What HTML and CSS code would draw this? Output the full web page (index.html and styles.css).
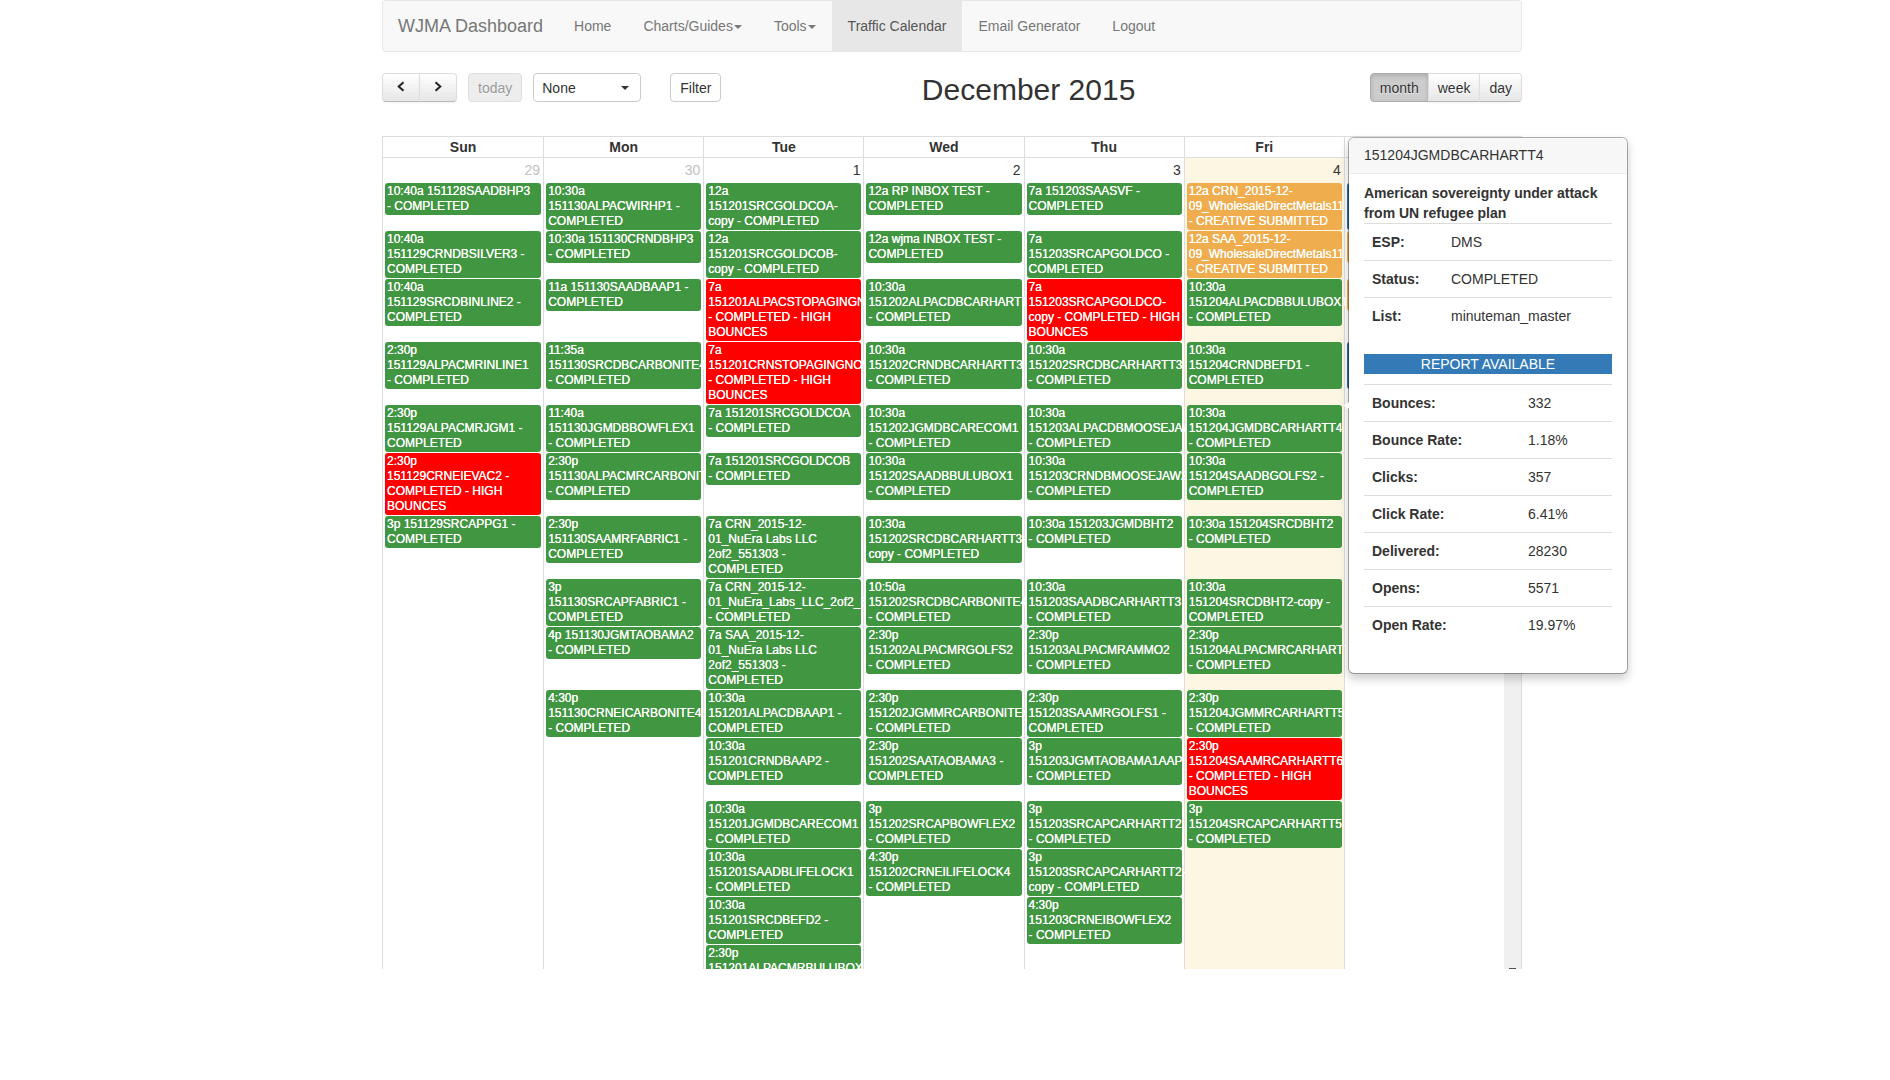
FILE: index.html
```html
<!DOCTYPE html>
<html lang="en">
<head>
<meta charset="utf-8">
<title>WJMA Dashboard</title>
<link rel="stylesheet" href="styles.css">
</head>
<body>
<div class="container">
  <nav class="navbar">
    <a class="brand" href="#">WJMA Dashboard</a>
    <a class="nav-link" href="#">Home</a>
    <a class="nav-link" href="#">Charts/Guides<span class="caret"></span></a>
    <a class="nav-link" href="#">Tools<span class="caret"></span></a>
    <a class="nav-link active" href="#">Traffic Calendar</a>
    <a class="nav-link" href="#">Email Generator</a>
    <a class="nav-link" href="#">Logout</a>
  </nav>

  <header class="toolbar">
    <div class="toolbar-left">
      <div class="btn-group">
        <button class="fc-btn arrow" type="button" aria-label="Previous"><svg width="10" height="12" viewBox="0 0 10 12"><path d="M7.5 1.200 2.700 5.500 7.500 9.800"/></svg></button>
        <button class="fc-btn arrow" type="button" aria-label="Next"><svg width="10" height="12" viewBox="0 0 10 12"><path d="M2.500 1.200 7.300 5.500 2.500 9.800"/></svg></button>
      </div>
      <button class="fc-btn today-btn" type="button" disabled>today</button>
      <div class="select-wrap">
        <select class="select" aria-label="Filter by"><option>None</option></select>
        <span class="caret"></span>
      </div>
      <button class="filter" type="button">Filter</button>
    </div>
    <h2 class="title">December 2015</h2>
    <div class="btn-group">
      <button class="fc-btn pressed" type="button">month</button>
      <button class="fc-btn" type="button">week</button>
      <button class="fc-btn" type="button">day</button>
    </div>
  </header>

  <main class="calendar">
    <div class="scroller">
      <div class="month-wrap">
      <table class="month">
        <thead>
          <tr><th>Sun</th><th>Mon</th><th>Tue</th><th>Wed</th><th>Thu</th><th>Fri</th><th>Sat</th></tr>
        </thead>
        <tbody>
          <tr class="numbers"><td class="other">29</td><td class="other">30</td><td>1</td><td>2</td><td>3</td><td class="today">4</td><td>5</td></tr>
          <tr>
            <td><a class="ev" href="#">10:40a 151128SAADBHP3<br>- COMPLETED</a></td>
            <td><a class="ev" href="#">10:30a<br>151130ALPACWIRHP1 - COMPLETED</a></td>
            <td><a class="ev" href="#">12a<br>151201SRCGOLDCOA-copy - COMPLETED</a></td>
            <td><a class="ev" href="#">12a RP INBOX TEST - COMPLETED</a></td>
            <td><a class="ev" href="#">7a 151203SAASVF - COMPLETED</a></td>
            <td class="today"><a class="ev orange" href="#">12a CRN_2015-12-<br>09_WholesaleDirectMetals11<br>- CREATIVE SUBMITTED</a></td>
            <td><a class="ev blue" href="#">10:30a<br>151205ALPACDBGOLFS2<br>- SCHEDULED</a></td>
          </tr>
          <tr>
            <td><a class="ev" href="#">10:40a<br>151129CRNDBSILVER3 - COMPLETED</a></td>
            <td><a class="ev" href="#">10:30a 151130CRNDBHP3<br>- COMPLETED</a></td>
            <td><a class="ev" href="#">12a<br>151201SRCGOLDCOB-copy - COMPLETED</a></td>
            <td><a class="ev" href="#">12a wjma INBOX TEST - COMPLETED</a></td>
            <td><a class="ev" href="#">7a<br>151203SRCAPGOLDCO - COMPLETED</a></td>
            <td class="today"><a class="ev orange" href="#">12a SAA_2015-12-<br>09_WholesaleDirectMetals11<br>- CREATIVE SUBMITTED</a></td>
            <td><a class="ev orange" href="#">12a 151205CRNDBHT2<br>- SUBMITTED</a></td>
          </tr>
          <tr>
            <td><a class="ev" href="#">10:40a<br>151129SRCDBINLINE2 - COMPLETED</a></td>
            <td><a class="ev" href="#">11a 151130SAADBAAP1 - COMPLETED</a></td>
            <td><a class="ev red" href="#">7a<br>151201ALPACSTOPAGINGNOW<br>- COMPLETED - HIGH BOUNCES</a></td>
            <td><a class="ev" href="#">10:30a<br>151202ALPACDBCARHARTT3<br>- COMPLETED</a></td>
            <td><a class="ev red" href="#">7a<br>151203SRCAPGOLDCO-copy - COMPLETED - HIGH BOUNCES</a></td>
            <td class="today"><a class="ev" href="#">10:30a<br>151204ALPACDBBULUBOX1<br>- COMPLETED</a></td>
            <td><a class="ev orange" href="#">12a 151205SAADBHT2<br>- SUBMITTED</a></td>
          </tr>
          <tr>
            <td><a class="ev" href="#">2:30p<br>151129ALPACMRINLINE1<br>- COMPLETED</a></td>
            <td><a class="ev" href="#">11:35a<br>151130SRCDBCARBONITE4<br>- COMPLETED</a></td>
            <td><a class="ev red" href="#">7a<br>151201CRNSTOPAGINGNOW<br>- COMPLETED - HIGH BOUNCES</a></td>
            <td><a class="ev" href="#">10:30a<br>151202CRNDBCARHARTT3<br>- COMPLETED</a></td>
            <td><a class="ev" href="#">10:30a<br>151202SRCDBCARHARTT3<br>- COMPLETED</a></td>
            <td class="today"><a class="ev" href="#">10:30a<br>151204CRNDBEFD1 - COMPLETED</a></td>
            <td><a class="ev blue" href="#">10:30a<br>151205SRCDBGOLFS2<br>- SCHEDULED</a></td>
          </tr>
          <tr>
            <td><a class="ev" href="#">2:30p<br>151129ALPACMRJGM1 - COMPLETED</a></td>
            <td><a class="ev" href="#">11:40a<br>151130JGMDBBOWFLEX1<br>- COMPLETED</a></td>
            <td><a class="ev" href="#">7a 151201SRCGOLDCOA<br>- COMPLETED</a></td>
            <td><a class="ev" href="#">10:30a<br>151202JGMDBCARECOM1<br>- COMPLETED</a></td>
            <td><a class="ev" href="#">10:30a<br>151203ALPACDBMOOSEJAW2<br>- COMPLETED</a></td>
            <td class="today"><a class="ev" href="#">10:30a<br>151204JGMDBCARHARTT4<br>- COMPLETED</a></td>
            <td></td>
          </tr>
          <tr>
            <td><a class="ev red" href="#">2:30p<br>151129CRNEIEVAC2 - COMPLETED - HIGH BOUNCES</a></td>
            <td><a class="ev" href="#">2:30p<br>151130ALPACMRCARBONITE4<br>- COMPLETED</a></td>
            <td><a class="ev" href="#">7a 151201SRCGOLDCOB<br>- COMPLETED</a></td>
            <td><a class="ev" href="#">10:30a<br>151202SAADBBULUBOX1<br>- COMPLETED</a></td>
            <td><a class="ev" href="#">10:30a<br>151203CRNDBMOOSEJAW2<br>- COMPLETED</a></td>
            <td class="today"><a class="ev" href="#">10:30a<br>151204SAADBGOLFS2 - COMPLETED</a></td>
            <td></td>
          </tr>
          <tr>
            <td><a class="ev" href="#">3p 151129SRCAPPG1 - COMPLETED</a></td>
            <td><a class="ev" href="#">2:30p<br>151130SAAMRFABRIC1 - COMPLETED</a></td>
            <td><a class="ev" href="#">7a CRN_2015-12-<br>01_NuEra Labs LLC 2of2_551303 - COMPLETED</a></td>
            <td><a class="ev" href="#">10:30a<br>151202SRCDBCARHARTT3-copy - COMPLETED</a></td>
            <td><a class="ev" href="#">10:30a 151203JGMDBHT2<br>- COMPLETED</a></td>
            <td class="today"><a class="ev" href="#">10:30a 151204SRCDBHT2<br>- COMPLETED</a></td>
            <td></td>
          </tr>
          <tr>
            <td></td>
            <td><a class="ev" href="#">3p<br>151130SRCAPFABRIC1 - COMPLETED</a></td>
            <td><a class="ev" href="#">7a CRN_2015-12-<br>01_NuEra_Labs_LLC_2of2_551303<br>- COMPLETED</a></td>
            <td><a class="ev" href="#">10:50a<br>151202SRCDBCARBONITE4<br>- COMPLETED</a></td>
            <td><a class="ev" href="#">10:30a<br>151203SAADBCARHARTT3<br>- COMPLETED</a></td>
            <td class="today"><a class="ev" href="#">10:30a<br>151204SRCDBHT2-copy - COMPLETED</a></td>
            <td></td>
          </tr>
          <tr>
            <td></td>
            <td><a class="ev" href="#">4p 151130JGMTAOBAMA2<br>- COMPLETED</a></td>
            <td><a class="ev" href="#">7a SAA_2015-12-<br>01_NuEra Labs LLC 2of2_551303 - COMPLETED</a></td>
            <td><a class="ev" href="#">2:30p<br>151202ALPACMRGOLFS2<br>- COMPLETED</a></td>
            <td><a class="ev" href="#">2:30p<br>151203ALPACMRAMMO2<br>- COMPLETED</a></td>
            <td class="today"><a class="ev" href="#">2:30p<br>151204ALPACMRCARHARTT5<br>- COMPLETED</a></td>
            <td></td>
          </tr>
          <tr>
            <td></td>
            <td><a class="ev" href="#">4:30p<br>151130CRNEICARBONITE4<br>- COMPLETED</a></td>
            <td><a class="ev" href="#">10:30a<br>151201ALPACDBAAP1 - COMPLETED</a></td>
            <td><a class="ev" href="#">2:30p<br>151202JGMMRCARBONITE4<br>- COMPLETED</a></td>
            <td><a class="ev" href="#">2:30p<br>151203SAAMRGOLFS1 - COMPLETED</a></td>
            <td class="today"><a class="ev" href="#">2:30p<br>151204JGMMRCARHARTT5<br>- COMPLETED</a></td>
            <td></td>
          </tr>
          <tr>
            <td></td>
            <td></td>
            <td><a class="ev" href="#">10:30a<br>151201CRNDBAAP2 - COMPLETED</a></td>
            <td><a class="ev" href="#">2:30p<br>151202SAATAOBAMA3 - COMPLETED</a></td>
            <td><a class="ev" href="#">3p<br>151203JGMTAOBAMA1AAP<br>- COMPLETED</a></td>
            <td class="today"><a class="ev red" href="#">2:30p<br>151204SAAMRCARHARTT6<br>- COMPLETED - HIGH BOUNCES</a></td>
            <td></td>
          </tr>
          <tr>
            <td></td>
            <td></td>
            <td><a class="ev" href="#">10:30a<br>151201JGMDBCARECOM1<br>- COMPLETED</a></td>
            <td><a class="ev" href="#">3p<br>151202SRCAPBOWFLEX2<br>- COMPLETED</a></td>
            <td><a class="ev" href="#">3p<br>151203SRCAPCARHARTT2<br>- COMPLETED</a></td>
            <td class="today"><a class="ev" href="#">3p<br>151204SRCAPCARHARTT5<br>- COMPLETED</a></td>
            <td></td>
          </tr>
          <tr>
            <td></td>
            <td></td>
            <td><a class="ev" href="#">10:30a<br>151201SAADBLIFELOCK1<br>- COMPLETED</a></td>
            <td><a class="ev" href="#">4:30p<br>151202CRNEILIFELOCK4<br>- COMPLETED</a></td>
            <td><a class="ev" href="#">3p<br><span class="nobreak">151203SRCAPCARHARTT2-</span><br>copy - COMPLETED</a></td>
            <td class="today"></td>
            <td></td>
          </tr>
          <tr>
            <td></td>
            <td></td>
            <td><a class="ev" href="#">10:30a<br>151201SRCDBEFD2 - COMPLETED</a></td>
            <td></td>
            <td><a class="ev" href="#">4:30p<br>151203CRNEIBOWFLEX2<br>- COMPLETED</a></td>
            <td class="today"></td>
            <td></td>
          </tr>
          <tr>
            <td></td>
            <td></td>
            <td><a class="ev" href="#">2:30p<br>151201ALPACMRBULUBOX1<br>- COMPLETED</a></td>
            <td></td>
            <td></td>
            <td class="today"></td>
            <td></td>
          </tr>
        </tbody>
      </table>
      </div>
      <div class="scrollbar"><svg width="7" height="4" viewBox="0 0 7 4"><path d="M0 0h7v1L3.500 4 0 1z"/></svg></div>
    </div>

    <aside class="popover">
      <h3 class="popover-title">151204JGMDBCARHARTT4</h3>
      <div class="popover-content">
        <strong class="subject">American sovereignty under attack from UN refugee plan</strong>
        <table class="details info">
          <tr><th>ESP:</th><td>DMS</td></tr>
          <tr><th>Status:</th><td>COMPLETED</td></tr>
          <tr><th>List:</th><td>minuteman_master</td></tr>
        </table>
        <div class="report">REPORT AVAILABLE</div>
        <table class="details stats">
          <tr><th>Bounces:</th><td>332</td></tr>
          <tr><th>Bounce Rate:</th><td>1.18%</td></tr>
          <tr><th>Clicks:</th><td>357</td></tr>
          <tr><th>Click Rate:</th><td>6.41%</td></tr>
          <tr><th>Delivered:</th><td>28230</td></tr>
          <tr><th>Opens:</th><td>5571</td></tr>
          <tr><th>Open Rate:</th><td>19.97%</td></tr>
        </table>
      </div>
    </aside>
  </main>
</div>
</body>
</html>
```

FILE: styles.css
```css
* { box-sizing: border-box; }

body {
  margin: 0;
  padding-left: 14px;
  background: #fff;
  color: #333;
  font: 14px/20px "Liberation Sans", Arial, sans-serif;
}

button, select { font: inherit; color: inherit; }

.container {
  display: flex;
  flex-direction: column;
  max-width: 1140px;
  height: 100vh;
  margin: 0 auto;
  padding-bottom: 111px;
}

/* Navigation */
.navbar {
  display: flex;
  flex: none;
  background: #f8f8f8;
  border: 1px solid #e7e7e7;
  border-radius: 4px;
}
.navbar a {
  padding: 15px 16px;
  color: #777;
  text-decoration: none;
}
.navbar .brand { padding: 15px; font-size: 18px; }
.navbar .active { background: #e7e7e7; color: #555; }

.caret {
  display: inline-block;
  border: 4px solid transparent;
  border-top-color: currentColor;
  border-bottom: 0;
  vertical-align: middle;
}
.nav-link .caret { margin-left: 1px; }

/* Calendar toolbar */
.toolbar {
  display: flex;
  flex: none;
  align-items: flex-start;
  justify-content: space-between;
  padding: 21px 0 29px;
}
.toolbar-left, .btn-group { display: flex; }

.fc-btn {
  height: 29px;
  padding: 0 9px;
  border: 1px solid;
  border-color: #dedede #dedede #b8b8b8;
  border-radius: 4px;
  background: linear-gradient(#fff, #e6e6e6);
  box-shadow: inset 0 1px 0 rgba(255, 255, 255, .2), 0 1px 2px rgba(0, 0, 0, .05);
  text-shadow: 0 1px 1px rgba(255, 255, 255, .75);
}
.btn-group .fc-btn:not(:first-child) {
  margin-left: -1px;
  border-top-left-radius: 0;
  border-bottom-left-radius: 0;
}
.btn-group .fc-btn:not(:last-child) {
  border-top-right-radius: 0;
  border-bottom-right-radius: 0;
}
.fc-btn.pressed {
  border-color: #adadad;
  background: #ccc;
  box-shadow: inset 0 2px 4px rgba(0, 0, 0, .15);
}
.fc-btn.arrow { width: 38px; }
.arrow svg { fill: none; stroke: #222; stroke-width: 2; }
.today-btn {
  margin-left: 11px;
  border-color: #dedede;
  background: #ededed;
  box-shadow: none;
  color: #999;
}
.select-wrap { position: relative; margin-left: 11px; }
.select {
  appearance: none;
  width: 108px;
  height: 29px;
  padding: 0 8px;
  border: 1px solid #ccc;
  border-radius: 4px;
  background: #fff;
}
.select-wrap .caret {
  position: absolute;
  top: 13px;
  right: 12px;
  pointer-events: none;
}
.filter {
  height: 29px;
  margin-left: 29px;
  padding: 0 9px;
  border: 1px solid #ccc;
  border-radius: 4px;
  background: #fff;
}
.title {
  margin: 0 34px 0 0;
  font-size: 30px;
  font-weight: 400;
  line-height: 34px;
}

/* Month grid */
.calendar {
  position: relative;
  display: flex;
  flex: 1;
  min-height: 0;
}
.scroller {
  display: flex;
  flex: 1;
  align-items: flex-start;
  border: 1px solid #ddd;
  border-bottom: 0;
  overflow: hidden;
}
.month-wrap { flex: 1; min-width: 0; }
.month {
  width: 100%;
  table-layout: fixed;
  border-collapse: separate;
  border-spacing: 0;
}
.month th {
  height: 21px;
  padding: 0;
  border-bottom: 1px solid #ddd;
  line-height: 20px;
}
.month td {
  padding: 1px 2px 0;
  vertical-align: top;
}
.month th + th, .month td + td { border-left: 1px solid #ddd; }
.month .numbers td {
  height: 24px;
  padding: 2px 3px;
  text-align: right;
}
.month .other { color: #c2c2c2; }
.month .today { background: #fdf6e3; }

.ev {
  position: relative;
  display: block;
  padding: 1px 0 1px 2px;
  border-radius: 3px;
  background: #419641;
  color: #fff;
  font-size: 12px;
  line-height: 15px;
  text-decoration: none;
  text-shadow: 0 0 0 #fff;
}
.ev.red { background: #f00; }
.ev.orange { background: #f0ad4e; }
.ev.blue { background: #2d6ca2; }
.nobreak { white-space: nowrap; }

.scrollbar {
  display: flex;
  flex: none;
  align-self: stretch;
  align-items: flex-end;
  justify-content: center;
  width: 17px;
  margin-top: 21px;
  background: #f0f0f0;
}
.scrollbar svg { margin-bottom: -3px; fill: #505050; }

/* Event details */
.popover {
  position: absolute;
  top: 1px;
  left: 966px;
  z-index: 2;
  width: 280px;
  border: 1px solid rgba(0, 0, 0, .3);
  border-radius: 6px;
  background: #fff;
  background-clip: padding-box;
  box-shadow: 0 5px 10px rgba(0, 0, 0, .2);
}
.popover::before {
  content: "";
  position: absolute;
  top: 50%;
  left: -6px;
  width: 8px;
  height: 8px;
  margin-top: -4px;
  background: #fff;
  clip-path: polygon(0 50%, 100% 0, 100% 100%);
}
.popover-title {
  margin: 0;
  padding: 8px 15px;
  border-bottom: 1px solid #ebebeb;
  border-radius: 5px 5px 0 0;
  background: #f7f7f7;
  font-size: 14px;
  font-weight: 400;
  line-height: 19px;
}
.popover-content { padding: 9px 15px 10px; }
.subject { display: block; }
.details {
  width: 100%;
  margin-bottom: 20px;
  table-layout: fixed;
  border-collapse: separate;
  border-spacing: 0;
}
.details th, .details td {
  padding: 8px;
  border-top: 1px solid #ddd;
  text-align: left;
}
.info th { width: 79px; }
.stats th { width: 156px; }
.report {
  margin-bottom: 10px;
  background: #337ab7;
  color: #fff;
  text-align: center;
}
```
